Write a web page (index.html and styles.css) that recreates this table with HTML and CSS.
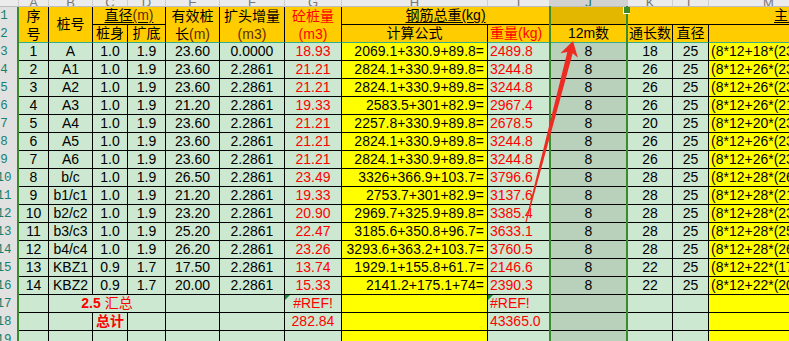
FILE: index.html
```html
<!DOCTYPE html>
<html lang="zh-CN">
<head>
<meta charset="utf-8">
<title>钢筋总重</title>
<link rel="stylesheet" href="styles.css">
</head>
<body>
<div class="sheet">
  <!-- column letters -->
  <div class="hd corner"></div>
  <div class="hd"><span>A</span></div>
  <div class="hd"><span>B</span></div>
  <div class="hd"><span>C</span></div>
  <div class="hd"><span>D</span></div>
  <div class="hd"><span>E</span></div>
  <div class="hd"><span>F</span></div>
  <div class="hd"><span>G</span></div>
  <div class="hd"><span>H</span></div>
  <div class="hd"><span>I</span></div>
  <div class="hd hd-sel"><span>J</span></div>
  <div class="hd"><span>K</span></div>
  <div class="hd"><span>L</span></div>
  <div class="hd"><span>M</span></div>

  <!-- row 1 -->
  <div class="rh">1</div>
  <div class="c o row2 fz"><span class="two">序<br>号</span></div>
  <div class="c o row2 fz">桩号</div>
  <div class="c o col2"><span class="ul">直径<span class="br">(m)</span></span></div>
  <div class="c o row2 fz"><span class="two">有效桩<br>长<span class="br">(m)</span></span></div>
  <div class="c o row2 fz"><span class="two">扩头增量<br><span class="br">(m3)</span></span></div>
  <div class="c o row2 fz r"><span class="two">砼桩量<br>(m3)</span></div>
  <div class="c o col2"><span class="ul">钢筋总重(kg)</span></div>
  <div class="c os"></div>
  <div class="c o col3 main"><span class="ul">主筋</span></div>

  <!-- row 2 -->
  <div class="rh">2</div>
  <div class="c o fz">桩身</div>
  <div class="c o fz">扩底</div>
  <div class="c o fz">计算公式</div>
  <div class="c o fz r w">重量(kg)</div>
  <div class="c o fz">12m数</div>
  <div class="c o fz">通长数</div>
  <div class="c o fz">直径</div>
  <div class="c o fz"></div>

  <!-- data rows -->
  <div class="rh">3</div><div class="c g">1</div><div class="c g">A</div><div class="c g">1.0</div><div class="c g">1.9</div><div class="c g">23.60</div><div class="c g">0.0000</div><div class="c g r">18.93</div><div class="c y f">2069.1+330.9+89.8=</div><div class="c g r w">2489.8</div><div class="c s">8</div><div class="c g">18</div><div class="c g">25</div><div class="c y m">(8*12+18*(23.60-1.0)+</div>
  <div class="rh">4</div><div class="c g">2</div><div class="c g">A1</div><div class="c g">1.0</div><div class="c g">1.9</div><div class="c g">23.60</div><div class="c g">2.2861</div><div class="c g r">21.21</div><div class="c y f">2824.1+330.9+89.8=</div><div class="c g r w">3244.8</div><div class="c s">8</div><div class="c g">26</div><div class="c g">25</div><div class="c y m">(8*12+26*(23.60-1.0)+</div>
  <div class="rh">5</div><div class="c g">3</div><div class="c g">A2</div><div class="c g">1.0</div><div class="c g">1.9</div><div class="c g">23.60</div><div class="c g">2.2861</div><div class="c g r">21.21</div><div class="c y f">2824.1+330.9+89.8=</div><div class="c g r w">3244.8</div><div class="c s">8</div><div class="c g">26</div><div class="c g">25</div><div class="c y m">(8*12+26*(23.60-1.0)+</div>
  <div class="rh">6</div><div class="c g">4</div><div class="c g">A3</div><div class="c g">1.0</div><div class="c g">1.9</div><div class="c g">21.20</div><div class="c g">2.2861</div><div class="c g r">19.33</div><div class="c y f">2583.5+301+82.9=</div><div class="c g r w">2967.4</div><div class="c s">8</div><div class="c g">26</div><div class="c g">25</div><div class="c y m">(8*12+26*(21.20-1.0)+</div>
  <div class="rh">7</div><div class="c g">5</div><div class="c g">A4</div><div class="c g">1.0</div><div class="c g">1.9</div><div class="c g">23.60</div><div class="c g">2.2861</div><div class="c g r">21.21</div><div class="c y f">2257.8+330.9+89.8=</div><div class="c g r w">2678.5</div><div class="c s">8</div><div class="c g">20</div><div class="c g">25</div><div class="c y m">(8*12+20*(23.60-1.0)+</div>
  <div class="rh">8</div><div class="c g">6</div><div class="c g">A5</div><div class="c g">1.0</div><div class="c g">1.9</div><div class="c g">23.60</div><div class="c g">2.2861</div><div class="c g r">21.21</div><div class="c y f">2824.1+330.9+89.8=</div><div class="c g r w">3244.8</div><div class="c s">8</div><div class="c g">26</div><div class="c g">25</div><div class="c y m">(8*12+26*(23.60-1.0)+</div>
  <div class="rh">9</div><div class="c g">7</div><div class="c g">A6</div><div class="c g">1.0</div><div class="c g">1.9</div><div class="c g">23.60</div><div class="c g">2.2861</div><div class="c g r">21.21</div><div class="c y f">2824.1+330.9+89.8=</div><div class="c g r w">3244.8</div><div class="c s">8</div><div class="c g">26</div><div class="c g">25</div><div class="c y m">(8*12+26*(23.60-1.0)+</div>
  <div class="rh">10</div><div class="c g">8</div><div class="c g">b/c</div><div class="c g">1.0</div><div class="c g">1.9</div><div class="c g">26.50</div><div class="c g">2.2861</div><div class="c g r">23.49</div><div class="c y f">3326+366.9+103.7=</div><div class="c g r w">3796.6</div><div class="c s">8</div><div class="c g">28</div><div class="c g">25</div><div class="c y m">(8*12+28*(26.50-1.0)+</div>
  <div class="rh">11</div><div class="c g">9</div><div class="c g">b1/c1</div><div class="c g">1.0</div><div class="c g">1.9</div><div class="c g">21.20</div><div class="c g">2.2861</div><div class="c g r">19.33</div><div class="c y f">2753.7+301+82.9=</div><div class="c g r w">3137.6</div><div class="c s">8</div><div class="c g">28</div><div class="c g">25</div><div class="c y m">(8*12+28*(21.20-1.0)+</div>
  <div class="rh">12</div><div class="c g">10</div><div class="c g">b2/c2</div><div class="c g">1.0</div><div class="c g">1.9</div><div class="c g">23.20</div><div class="c g">2.2861</div><div class="c g r">20.90</div><div class="c y f">2969.7+325.9+89.8=</div><div class="c g r w">3385.4</div><div class="c s">8</div><div class="c g">28</div><div class="c g">25</div><div class="c y m">(8*12+28*(23.20-1.0)+</div>
  <div class="rh">13</div><div class="c g">11</div><div class="c g">b3/c3</div><div class="c g">1.0</div><div class="c g">1.9</div><div class="c g">25.20</div><div class="c g">2.2861</div><div class="c g r">22.47</div><div class="c y f">3185.6+350.8+96.7=</div><div class="c g r w">3633.1</div><div class="c s">8</div><div class="c g">28</div><div class="c g">25</div><div class="c y m">(8*12+28*(25.20-1.0)+</div>
  <div class="rh">14</div><div class="c g">12</div><div class="c g">b4/c4</div><div class="c g">1.0</div><div class="c g">1.9</div><div class="c g">26.20</div><div class="c g">2.2861</div><div class="c g r">23.26</div><div class="c y f">3293.6+363.2+103.7=</div><div class="c g r w">3760.5</div><div class="c s">8</div><div class="c g">28</div><div class="c g">25</div><div class="c y m">(8*12+28*(26.20-1.0)+</div>
  <div class="rh">15</div><div class="c g">13</div><div class="c g">KBZ1</div><div class="c g">0.9</div><div class="c g">1.7</div><div class="c g">17.50</div><div class="c g">2.2861</div><div class="c g r">13.74</div><div class="c y f">1929.1+155.8+61.7=</div><div class="c g r w">2146.6</div><div class="c s">8</div><div class="c g">22</div><div class="c g">25</div><div class="c y m">(8*12+22*(17.50-0.9)+</div>
  <div class="rh">16</div><div class="c g">14</div><div class="c g">KBZ2</div><div class="c g">0.9</div><div class="c g">1.7</div><div class="c g">20.00</div><div class="c g">2.2861</div><div class="c g r">15.33</div><div class="c y f">2141.2+175.1+74=</div><div class="c g r w">2390.3</div><div class="c s">8</div><div class="c g">22</div><div class="c g">25</div><div class="c y m">(8*12+22*(20.00-0.9)+</div>

  <!-- row 17 -->
  <div class="rh">17</div><div class="c g"></div><div class="c g col3 r sum"><b>2.5</b>&nbsp;汇总</div><div class="c g"></div><div class="c g"></div><div class="c g r tri">#REF!</div><div class="c y"></div><div class="c g r w tri">#REF!</div><div class="c s"></div><div class="c g"></div><div class="c g"></div><div class="c y"></div>
  <!-- row 18 -->
  <div class="rh">18</div><div class="c g"></div><div class="c g"></div><div class="c g r bold">总计</div><div class="c g"></div><div class="c g"></div><div class="c g"></div><div class="c g r">282.84</div><div class="c y"></div><div class="c g r w">43365.0</div><div class="c s"></div><div class="c g"></div><div class="c g"></div><div class="c y"></div>
  <!-- row 19 -->
  <div class="rh">19</div><div class="c g"></div><div class="c g"></div><div class="c g"></div><div class="c g"></div><div class="c g"></div><div class="c g"></div><div class="c g"></div><div class="c y"></div><div class="c g"></div><div class="c s"></div><div class="c g"></div><div class="c g"></div><div class="c y"></div>

  <div class="sel"></div>
  <div class="handle"></div>
  <svg class="arrow" width="789" height="341" viewBox="0 0 789 341">
    <polygon points="573,41 577.9,57.8 572.7,53.3 526.6,222.1 525.4,221.9 567.3,51.9 560.5,53.3" fill="#ee2b22"/>
  </svg>
</div>
</body>
</html>
```

FILE: styles.css
```css
html, body {
  margin: 0;
  padding: 0;
  width: 789px;
  height: 341px;
  overflow: hidden;
  background: #ffffff;
}

.sheet {
  position: relative;
  display: grid;
  grid-template-columns: 19px 30px 44px 35px 38px 54px 65px 57px 146px 62px 78px 45px 36px 120px;
  grid-template-rows: 7px repeat(19, 18px);
  width: 829px;
  font-family: "Liberation Sans", "Noto Sans CJK SC", sans-serif;
  font-size: 14px;
  color: #000;
}

/* column letter strip (only the bottom sliver is visible) */
.hd {
  box-sizing: border-box;
  background: #ececec;
  border-right: 1px solid #cfcfcf;
  border-bottom: 1px solid #bdbdbd;
  overflow: hidden;
  display: flex;
  justify-content: center;
  align-items: flex-end;
  font-family: "Liberation Sans", sans-serif;
  font-size: 13px;
  line-height: 7px;
  color: #777;
}
.hd-sel {
  background: #d2d2d2;
  color: #217346;
}

/* row numbers */
.rh {
  box-sizing: border-box;
  background: #e1e1e1;
  border-right: 2px solid #3b8a2e;
  display: flex;
  justify-content: center;
  align-items: center;
  padding-right: 9px;
  font-family: "Liberation Mono", monospace;
  font-size: 12.5px;
  color: #17806b;
  white-space: nowrap;
}

/* cells */
.c {
  box-sizing: border-box;
  border-right: 1px solid #000;
  border-bottom: 1px solid #000;
  display: flex;
  align-items: center;
  justify-content: center;
  text-align: center;
  white-space: nowrap;
  overflow: hidden;
  line-height: 17px;
  position: relative;
}

.two {
  display: block;
  line-height: 18px;
}

.o { background: #ffcc00; }
.os { background: #e3b600; }
.g { background: #cde8d0; }
.y { background: #ffff00; }
.s { background: #b9d0bb; }

.r { color: #ff0000; }
.br { color: #5c2c00; }

.row2 { grid-row: span 2; }
.col2 { grid-column: span 2; }
.col3 { grid-column: span 3; }

.fz { border-bottom-color: #2fae89; }

.ul {
  text-decoration: underline;
  text-underline-offset: 2px;
}

.main {
  justify-content: flex-start;
  padding-left: 146px;
}

.f {
  justify-content: flex-end;
  padding-right: 3px;
}

.w {
  justify-content: flex-start;
  padding-left: 2px;
}

.m {
  justify-content: flex-start;
  padding-left: 2px;
  border-right: none;
}

.sum b { font-weight: bold; }

.bold { font-weight: bold; }

.tri::before {
  content: "";
  position: absolute;
  left: 0;
  top: 0;
  border-top: 5px solid #1f8a3c;
  border-right: 5px solid transparent;
}

/* selection overlay on column J */
.sel {
  position: absolute;
  left: 549px;
  top: 6px;
  width: 79px;
  height: 343px;
  box-sizing: border-box;
  border-left: 2px solid #3b8a2e;
  border-right: 2px solid #3b8a2e;
}

.handle {
  position: absolute;
  left: 623px;
  top: 7px;
  width: 7px;
  height: 7px;
  box-sizing: border-box;
  background: #3b8a2e;
  border-left: 1px solid #ffffff;
  border-bottom: 1px solid #ffffff;
}

.arrow {
  position: absolute;
  left: 0;
  top: 0;
  pointer-events: none;
}
```
